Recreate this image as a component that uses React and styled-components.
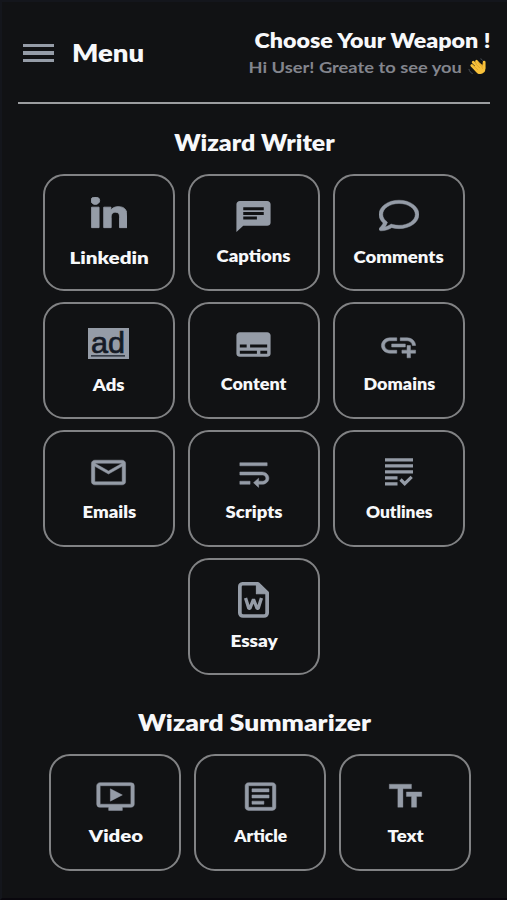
import styled, { createGlobalStyle } from "styled-components";
import { FaLinkedinIn, FaRegComment } from "react-icons/fa";
import {
  MdAddLink,
  MdChat,
  MdMailOutline,
  MdOndemandVideo,
  MdOutlineArticle,
  MdSubtitles,
  MdTextFields,
  MdWrapText,
} from "react-icons/md";

const colors = {
  background: "#111214",
  border: "#818284",
  icon: "#959ca7",
  muted: "#83858d",
  white: "#f7f8fa",
};

function AdIcon(props) {
  return (
    <svg viewBox="0 0 41 31" fill="currentColor" {...props}>
      <path d="M0 0h41v31H0z" />
      <text x="3" y="25" textLength="34" lengthAdjust="spacingAndGlyphs" fontFamily="Liberation Sans" fontSize="29" fontWeight="400" fill="#151b26" stroke="#151b26" strokeWidth=".7">ad</text>
      <path d="M3 27.2h34v1.4H3z" fill="#151b26" />
    </svg>
  );
}

function OutlineIcon(props) {
  return (
    <svg viewBox="0 0 28 28" fill="none" stroke="currentColor" strokeWidth="3.2" {...props}>
      <path d="M0 1.8h28M0 7.8h28M0 13.8h28M0 19.8h12.5M0 25.8h12.5" />
      <path d="M15.5 21.5l4.2 4.2 7-6.8" />
    </svg>
  );
}

function WordIcon(props) {
  return (
    <svg viewBox="0 0 30 36" fill="none" stroke="currentColor" strokeWidth="3.6" strokeLinejoin="round" {...props}>
      <path d="M4.5 1.8h14.7l9 9V31a3 3 0 0 1-3 3H4.8a3 3 0 0 1-3-3V4.8a3 3 0 0 1 2.7-3z" />
      <path d="M17.8 2v9.7H28z" fill="currentColor" strokeWidth="1" />
      <path d="M7.3 16l3.2 10.5h1L15 17.3l3.5 9.2h1L22.7 16" strokeWidth="3.2" strokeLinejoin="bevel" />
    </svg>
  );
}

function WaveIcon(props) {
  return (
    <svg viewBox="0 0 20 19" fill="none" strokeLinecap="round" {...props}>
      <g stroke="#f8c13a" strokeWidth="3">
        <path d="M4 8l7 7M5.5 4.5l8 8M9 3.5l7 8M17 4.5v6" />
      </g>
      <path d="M5 10l7-5 5 4 1 1c1 4-1 6-5 7-3 0-6-4-8-7z" fill="#f8c13a" />
      <path d="M6 8.3l4 4M8 6l4.3 4.4M11 5l3.2 3.7M16 6c-1.5 2-1.6 3.5-.8 5" stroke="#d99a25" strokeWidth=".7" />
      <path d="M1 12c.4 2 1.8 3.7 3.5 4.2M13.5 1c1 .3 1.7.9 2 1.5" stroke="#4c555d" strokeWidth="1" />
    </svg>
  );
}

const writerTools = [
  { label: "Linkedin", Icon: FaLinkedinIn, w: 36, h: 35, top: 23, size: 17.5, baseline: 90, stretch: 1.18, bold: 12 },
  { label: "Captions", Icon: MdChat, w: 41, h: 37, top: 24, baseline: 88, stretch: 1.12 },
  { label: "Comments", Icon: FaRegComment, w: 40, h: 35, top: 24, baseline: 89, stretch: 1.125, bold: 6 },
  { label: "Ads", Icon: AdIcon, w: 41, h: 31, top: 26, baseline: 89, stretch: 1.12 },
  { label: "Content", Icon: MdSubtitles, w: 41, h: 37, top: 24, baseline: 88, stretch: 1.09 },
  { label: "Domains", Icon: MdAddLink, w: 41, h: 37, top: 25, baseline: 88, stretch: 1.09, bold: 0.3 },
  { label: "Emails", Icon: MdMailOutline, w: 41, h: 37, top: 24, baseline: 88, stretch: 1.12, bold: 0.3 },
  { label: "Scripts", Icon: MdWrapText, w: 41, h: 37, top: 25, baseline: 88, stretch: 1.12, bold: 0.3 },
  { label: "Outlines", Icon: OutlineIcon, w: 28, h: 28, top: 28, baseline: 88, stretch: 1.05 },
  { label: "Essay", Icon: WordIcon, w: 31, h: 36, top: 24, baseline: 89, stretch: 1.15 },
];

const summarizerTools = [
  { label: "Video", Icon: MdOndemandVideo, w: 41, h: 37, top: 24, size: 17.5, baseline: 88, stretch: 1.165, bold: 0.3 },
  { label: "Article", Icon: MdOutlineArticle, w: 41, h: 37, top: 24, baseline: 88, stretch: 1.05, bold: 0.3 },
  { label: "Text", Icon: MdTextFields, w: 41, h: 37, top: 24, baseline: 88, stretch: 1.12, bold: 0.2 },
];

function ToolCard({ tool }) {
  const { Icon, label, w, h, top, size, baseline, stretch, bold } = tool;
  return (
    <CardStyled>
      <IconBox $top={top} $width={w} $height={h} $bottom={baseline} $bold={bold}>
        <Icon preserveAspectRatio="none" />
      </IconBox>
      <CardLabel $size={size} $stretch={stretch}>{label}</CardLabel>
    </CardStyled>
  );
}

export default function App() {
  return (
    <>
      <GlobalStyle />
      <PageStyled>
        <HeaderStyled>
          <div className="left-side">
            <MenuButton aria-label="Menu">
              <span />
              <span />
              <span />
            </MenuButton>
            <MenuTitle>Menu</MenuTitle>
          </div>
          <div className="right-side">
            <Headline>Choose Your Weapon !</Headline>
            <Greeting>
              <span>Hi User! Greate to see you</span>
              <WaveIcon width={19} height={18} />
            </Greeting>
          </div>
        </HeaderStyled>
        <SectionTitle $height={70} $stretch={1.105}>Wizard Writer</SectionTitle>
        <CardGrid>
          {writerTools.map((tool) => <ToolCard key={tool.label} tool={tool} />)}
        </CardGrid>
        <SectionTitle $height={79} $stretch={1.17}>Wizard Summarizer</SectionTitle>
        <CardGrid $shift={13}>
          {summarizerTools.map((tool) => <ToolCard key={tool.label} tool={tool} />)}
        </CardGrid>
      </PageStyled>
    </>
  );
}

const GlobalStyle = createGlobalStyle`
  * {
    box-sizing: border-box;
  }

  body {
    margin: 0;
    background: ${colors.background};
    color: ${colors.white};
    font-family: Lato, sans-serif;
    font-variant-ligatures: none;
  }
`;

const PageStyled = styled.main`
  width: 507px;
  height: 900px;
  overflow: hidden;
  background: ${colors.background};
  border-top: 2px solid #14161c;
  border-left: 2px solid #14161c;
  border-bottom: 2px solid #09070d;
`;

const HeaderStyled = styled.header`
  display: flex;
  justify-content: space-between;
  height: 102px;
  margin: 0 17px 0 16px;
  border-bottom: 2px solid #9b9da0;

  .left-side {
    display: flex;
    align-items: flex-start;
    gap: 18px;
    padding: 33px 0 0 5px;
  }

  .right-side {
    display: flex;
    flex-direction: column;
    align-items: flex-end;
    padding-top: 24px;
  }
`;

const MenuButton = styled.button`
  display: flex;
  flex-direction: column;
  gap: 4px;
  width: 31px;
  margin-top: 9px;
  padding: 0;
  border: 0;
  background: none;

  span {
    width: 100%;
    height: 3.4px;
    background: ${colors.icon};
  }
`;

const MenuTitle = styled.span`
  font-size: 25px;
  line-height: 34px;
  font-weight: 800;
  transform: scaleX(1.1);
  transform-origin: left;
`;

const Headline = styled.span`
  font-size: 21px;
  line-height: 28px;
  font-weight: 800;
  white-space: nowrap;
  transform: scaleX(1.105);
  transform-origin: right;
`;

const Greeting = styled.div`
  display: flex;
  align-items: center;
  gap: 6px;
  padding: 1px 3px 0 0;
  color: ${colors.muted};
  font-size: 15.5px;
  line-height: 24px;
  font-weight: 700;
  white-space: nowrap;

  span {
    transform: scaleX(1.18);
    transform-origin: right;
  }
`;

const SectionTitle = styled.h2`
  height: ${({ $height }) => $height}px;
  margin: 0;
  padding-top: ${({ $height }) => $height - 46}px;
  font-size: 22.5px;
  line-height: 30px;
  font-weight: 800;
  text-align: center;
  transform: scaleX(${({ $stretch }) => $stretch});
`;

const CardGrid = styled.section`
  display: flex;
  flex-wrap: wrap;
  justify-content: center;
  gap: 11px 13px;
  width: 423px;
  margin-left: ${({ $shift = 0 }) => 40 + $shift / 2}px;
`;

const CardStyled = styled.button`
  display: flex;
  flex-direction: column;
  align-items: center;
  width: 132px;
  height: 117px;
  padding: 0;
  border: 2px solid ${colors.border};
  border-radius: 21px;
  background: transparent;
  color: ${colors.icon};
  font-family: inherit;
`;

const IconBox = styled.span`
  display: flex;
  flex: none;
  height: ${({ $bottom }) => $bottom - 20}px;
  padding-top: ${({ $top }) => $top - 2}px;

  > svg {
    width: ${({ $width }) => $width}px;
    height: ${({ $height }) => $height}px;
    ${({ $bold }) => $bold && `stroke: currentColor; stroke-width: ${$bold};`}
  }

  /* material icons carry an empty bounding path */
  > svg > path[d^="M0 0h24v24H0"] {
    stroke: none;
  }
`;

const CardLabel = styled.span`
  color: ${colors.white};
  font-size: ${({ $size = 16.5 }) => $size}px;
  line-height: 24px;
  font-weight: 800;
  transform: translateX(0.5px) scaleX(${({ $stretch }) => $stretch});
`;
